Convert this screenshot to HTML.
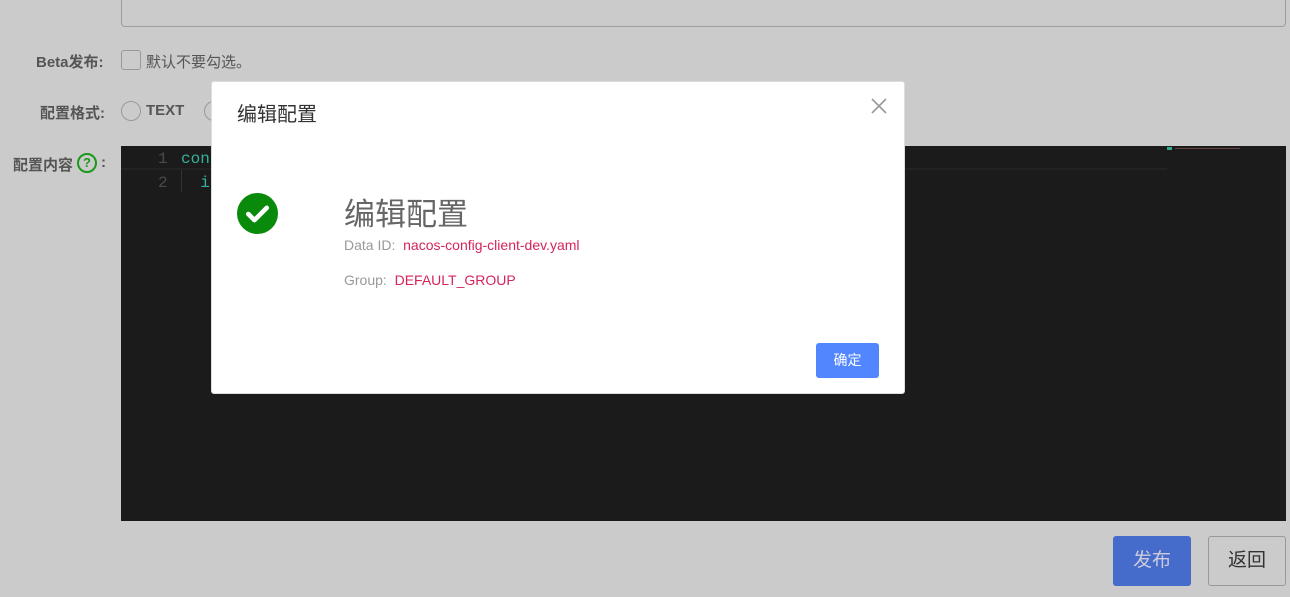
<!DOCTYPE html>
<html><head><meta charset="utf-8"><style>
*{margin:0;padding:0;box-sizing:border-box}
body{width:1290px;height:597px;background:#cbcbcb;position:relative;overflow:hidden;font-family:"Liberation Sans","Noto Sans CJK SC",sans-serif}
.a{position:absolute}
.lbl{font-size:15px;font-weight:bold;color:#555;}
</style></head><body>
<div class="a" style="left:121px;top:-4px;width:1165px;height:31px;border:1px solid #9e9e9e;border-radius:4px"></div>
<div class="a lbl" style="left:36px;top:51px">Beta发布:</div>
<div class="a" style="left:121px;top:50px;width:20px;height:20px;border:1px solid #999;border-radius:3px"></div>
<div class="a" style="left:146px;top:51px;font-size:15px;color:#555">默认不要勾选。</div>
<div class="a lbl" style="left:40px;top:102px">配置格式:</div>
<div class="a" style="left:121px;top:101px;width:20px;height:20px;border:1px solid #999;border-radius:50%"></div>
<div class="a lbl" style="left:146px;top:102px;font-size:15px">TEXT</div>
<div class="a" style="left:204px;top:101px;width:20px;height:20px;border:1px solid #999;border-radius:50%"></div>
<div class="a lbl" style="left:13px;top:154px">配置内容</div>
<div class="a" style="left:77px;top:153px;width:20px;height:20px;border:2px solid #1a9a1a;border-radius:50%;color:#1a9a1a;font-size:13px;font-weight:bold;text-align:center;line-height:16px">?</div>
<div class="a lbl" style="left:101px;top:154px">:</div>
<div class="a" style="left:121px;top:146px;width:1165px;height:375px;background:#1b1b1b"></div>
<div class="a" style="left:121px;top:168px;width:1046px;height:2px;background:#232323"></div>
<div class="a" style="left:181px;top:170px;width:1px;height:22px;background:#333"></div>
<div class="a" style="left:158px;top:147px;font-family:'Liberation Mono',monospace;font-size:16px;color:#4a4a4a;line-height:24px">1<br>2</div>
<div class="a" style="left:181px;top:147px;font-family:'Liberation Mono',monospace;font-size:16px;color:#35b09a;line-height:24px">con<br>&nbsp;&nbsp;i</div>
<div class="a" style="left:1167px;top:147px;width:5px;height:3px;background:#3a8"></div>
<div class="a" style="left:1175px;top:148px;width:65px;height:1px;background:#644"></div>
<div class="a" style="left:211px;top:81px;width:694px;height:313px;background:#fff;border:1px solid #ddd;border-radius:3px"></div>
<div class="a" style="left:237px;top:98px;font-size:20px;color:#333">编辑配置</div>
<svg class="a" style="left:870px;top:97px" width="18" height="18" viewBox="0 0 18 18"><path d="M2 2L16 16M16 2L2 16" stroke="#999" stroke-width="1.6"/></svg>
<svg class="a" style="left:237px;top:193px" width="41" height="41" viewBox="0 0 40 40"><circle cx="20" cy="20" r="20" fill="#0a8a0a"/><path d="M11 20.5l6 6 12-12" stroke="#fff" stroke-width="4.5" fill="none" stroke-linecap="round" stroke-linejoin="round"/></svg>
<div class="a" style="left:344px;top:189px;font-size:31px;color:#666">编辑配置</div>
<div class="a" style="left:344px;top:237px;font-size:14px;color:#999">Data ID:&nbsp; <span style="color:#d6245a">nacos-config-client-dev.yaml</span></div>
<div class="a" style="left:344px;top:272px;font-size:14px;color:#999">Group:&nbsp; <span style="color:#d6245a">DEFAULT_GROUP</span></div>
<div class="a" style="left:816px;top:343px;width:63px;height:35px;background:#5286ff;border-radius:3px;color:#fff;font-size:14px;text-align:center;line-height:35px">确定</div>
<div class="a" style="left:1113px;top:536px;width:78px;height:50px;background:#456bcb;border-radius:3px;color:#ccd;font-size:19px;text-align:center;line-height:50px">发布</div>
<div class="a" style="left:1208px;top:536px;width:78px;height:50px;border:1px solid #999;border-radius:3px;color:#333;font-size:19px;text-align:center;line-height:48px">返回</div>
</body></html>
